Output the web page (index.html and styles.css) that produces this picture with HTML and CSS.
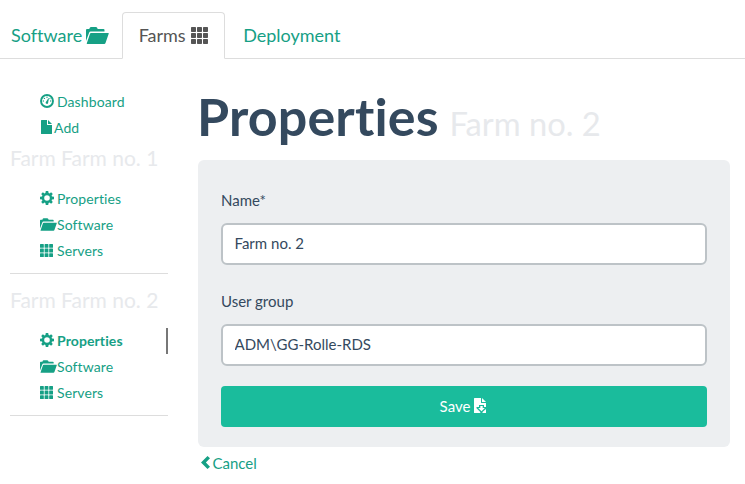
FILE: index.html
```html
<!DOCTYPE html>
<html lang="en">
<head>
<meta charset="utf-8">
<title>Farm properties</title>
<link rel="stylesheet" href="styles.css">
</head>
<body>
<svg class="defs" aria-hidden="true">
  <symbol id="folder" viewBox="0 0 23 17"><path d="M0 14V3Q0 2 1 2H3.200L4 .5Q4.200 0 5 0H10Q10.600 0 11 .6L11.700 2H17.500Q18.500 2 18.500 3V4.500H4.600Q3.600 4.500 3.200 5.500ZM5 6H22.300Q23 6 22.700 6.800L19.500 16Q19.200 17 18.200 17H1.200Q.5 17 .8 16.200L4 6.800Q4.200 6 5 6Z"/></symbol>
  <symbol id="grid" viewBox="0 0 17 17"><path d="M.7 0H4.300Q5 0 5 .7V4.300Q5 5 4.300 5H.7Q0 5 0 4.300V.7Q0 0 .7 0ZM6.700 0H10.300Q11 0 11 .7V4.300Q11 5 10.300 5H6.700Q6 5 6 4.300V.7Q6 0 6.700 0ZM12.700 0H16.300Q17 0 17 .7V4.300Q17 5 16.300 5H12.700Q12 5 12 4.300V.7Q12 0 12.700 0ZM.7 6H4.300Q5 6 5 6.700V10.300Q5 11 4.300 11H.7Q0 11 0 10.300V6.700Q0 6 .7 6ZM6.700 6H10.300Q11 6 11 6.700V10.300Q11 11 10.300 11H6.700Q6 11 6 10.300V6.700Q6 6 6.700 6ZM12.700 6H16.300Q17 6 17 6.700V10.300Q17 11 16.300 11H12.700Q12 11 12 10.300V6.700Q12 6 12.700 6ZM.7 12H4.300Q5 12 5 12.700V16.300Q5 17 4.300 17H.7Q0 17 0 16.300V12.700Q0 12 .7 12ZM6.700 12H10.300Q11 12 11 12.700V16.300Q11 17 10.300 17H6.700Q6 17 6 16.300V12.700Q6 12 6.700 12ZM12.700 12H16.300Q17 12 17 12.700V16.300Q17 17 16.300 17H12.700Q12 17 12 16.300V12.700Q12 12 12.700 12Z"/></symbol>
  <symbol id="gear" viewBox="0 0 14 14"><path fill-rule="evenodd" d="M5.800 0H8.200L8.600 2 9.500 2.400 11.100 1.200 12.800 2.900 11.600 4.500 12 5.400 14 5.800V8.200L12 8.600 11.600 9.500 12.800 11.100 11.100 12.800 9.500 11.600 8.600 12 8.200 14H5.800L5.400 12 4.500 11.600 2.900 12.800 1.200 11.100 2.400 9.500 2 8.600 0 8.200V5.800L2 5.400 2.400 4.500 1.200 2.900 2.900 1.200 4.500 2.400 5.400 2ZM7 4.200A2.800 2.800 0 1 0 7 9.800 2.800 2.800 0 1 0 7 4.200Z"/></symbol>
  <symbol id="dash" viewBox="0 0 14 14"><circle cx="7" cy="7" r="6" fill="none" stroke="currentColor" stroke-width="1.900"/><path d="M5.700 8.300 6.600 7 8.300 4.200 9 4.500 8.300 7.500 8.100 9A1.250 1.250 0 0 1 5.700 8.300Z"/><circle cx="3.300" cy="7" r=".7"/><circle cx="4.400" cy="4.400" r=".7"/><circle cx="7" cy="3.300" r=".7"/><circle cx="10.700" cy="7" r=".7"/><circle cx="9.900" cy="4.600" r=".6"/></symbol>
  <symbol id="file" viewBox="0 0 11 14"><path d="M.6 0H6V4.400Q6 5 6.600 5H11V13.400Q11 14 10.400 14H.6Q0 14 0 13.400V.6Q0 0 .6 0ZM7 0 11 4H7Z"/></symbol>
  <symbol id="save" viewBox="0 0 12 15"><path d="M.6 0H7V4.400Q7 5 7.600 5H12V9H10V7H5V9H2.500V10.200L6.300 14V15H.6Q0 15 0 14.400V.6Q0 0 .6 0ZM8 0 12 4H8Z"/><path d="M6.300 8H8.700V10H10.800L7.500 13.200 4.200 10H6.300ZM12 11V15H8.500V14Z"/></symbol>
  <symbol id="chevron" viewBox="0 0 9 13"><path d="M6.500 0 9 2.300 4.900 6.500 9 10.700 6.500 13 0 6.500Z"/></symbol>
</svg>
<nav class="tabs">
  <a class="tab"><span>Software</span><svg class="tab-folder"><use href="#folder"/></svg></a>
  <a class="tab active"><span>Farms</span><svg class="tab-grid"><use href="#grid"/></svg></a>
  <a class="tab"><span>Deployment</span></a>
</nav>
<div class="layout">
  <aside class="sidebar">
    <ul class="menu">
      <li><svg class="icon"><use href="#dash"/></svg><span>Dashboard</span></li>
      <li><svg class="icon icon-file"><use href="#file"/></svg><span>Add</span></li>
    </ul>
    <h2 class="farm">Farm Farm no. 1</h2>
    <ul class="menu">
      <li><svg class="icon"><use href="#gear"/></svg><span>Properties</span></li>
      <li><svg class="icon icon-folder"><use href="#folder"/></svg><span>Software</span></li>
      <li><svg class="icon icon-grid"><use href="#grid"/></svg><span>Servers</span></li>
    </ul>
    <hr>
    <h2 class="farm">Farm Farm no. 2</h2>
    <ul class="menu">
      <li class="current"><svg class="icon"><use href="#gear"/></svg><span>Properties</span></li>
      <li><svg class="icon icon-folder"><use href="#folder"/></svg><span>Software</span></li>
      <li><svg class="icon icon-grid"><use href="#grid"/></svg><span>Servers</span></li>
    </ul>
    <hr>
  </aside>
  <main class="content">
    <h1>Properties <small>Farm no. 2</small></h1>
    <form class="panel">
      <label for="name">Name*</label>
      <input id="name" type="text" value="Farm no. 2">
      <label for="group">User group</label>
      <input id="group" type="text" value="ADM\GG-Rolle-RDS">
      <button type="button">Save <svg class="save-icon"><use href="#save"/></svg></button>
    </form>
    <a class="cancel"><svg class="chevron"><use href="#chevron"/></svg><span>Cancel</span></a>
  </main>
</div>
</body>
</html>
```
FILE: styles.css
```css
* { box-sizing: border-box; }
body {
  margin: 0;
  padding-top: 12px;
  background: #fff;
  color: #34495e;
  font: 18px/26px Lato, "Liberation Sans", sans-serif;
  font-variant-ligatures: none;
}
svg { fill: currentColor; flex: none; }
.defs { display: none; }

.tabs {
  display: flex;
  height: 47px;
  border-bottom: 1px solid #ddd;
}
.tab {
  display: flex;
  align-items: center;
  gap: 4px;
  height: 47px;
  padding: 0 13px 0 11px;
  color: #16a085;
}
.tab span { margin-top: -2px; }
.tab svg { margin-top: -1px; }
.tab.active {
  width: 103px;
  gap: 5px;
  padding: 0 0 0 15.5px;
  margin-right: 7px;
  border: 1px solid #ddd;
  border-bottom-color: #fff;
  border-radius: 4px 4px 0 0;
  background: #fff;
  color: #555;
}
.tab-folder { width: 23px; height: 17px; }
.tab-grid { width: 17px; height: 17px; }

.layout { display: flex; }
.sidebar { width: 158px; margin: 30px 30px 0 10px; }
.menu { margin: 0; padding: 0; list-style: none; }
.menu li {
  display: flex;
  align-items: center;
  height: 26px;
  padding-left: 30px;
  font-size: 14px;
  letter-spacing: .1px;
  color: #16a085;
}
.menu .current { border-right: 2px solid #777; font-weight: 700; }
.icon { width: 14px; height: 14px; margin: -2px 3px 0 0; }
.icon-file { width: 11px; margin: -2px 2px 0 1px; }
.icon-folder { width: 17px; height: 13px; margin: -1px 0 0; }
.icon-grid { width: 13px; height: 13px; margin: -1px 4px 0 0; }
.farm {
  height: 45px;
  margin: 0;
  padding-top: 4px;
  font-size: 21px;
  line-height: 26px;
  font-weight: 400;
  color: #e7e9ec;
  white-space: nowrap;
}
.sidebar hr { height: 1px; margin: 9px 0; border: 0; background: #ddd; }

.content { width: 532px; }
h1 {
  height: 101px;
  margin: 0 0 0 -1px;
  padding-top: 29px;
  font-size: 52px;
  line-height: 57px;
  font-weight: 700;
  letter-spacing: .15px;
  word-spacing: -2px;
  white-space: nowrap;
}
h1 small {
  font-size: 32.7px;
  font-weight: 400;
  letter-spacing: 0;
  word-spacing: 0;
  color: #e7e9ec;
  line-height: 1;
}
.panel {
  display: flex;
  flex-direction: column;
  height: 287px;
  padding: 27px 23px 20px;
  border-radius: 6px;
  background: #edeff1;
}
.panel label { font-size: 15px; line-height: 26px; margin-bottom: 10px; }
.panel input {
  height: 42px;
  margin: 0 0 23px;
  padding: 0 12px 2px 11.5px;
  border: 2px solid #bdc3c7;
  border-radius: 6px;
  background: #fff;
  color: #34495e;
  font: 15px/22px Lato, sans-serif;
}
.panel button {
  display: flex;
  align-items: center;
  justify-content: center;
  gap: 4px;
  height: 41px;
  margin-top: -3px;
  padding: 0 2px 0 0;
  border: 0;
  border-radius: 4px;
  background: #1abc9c;
  color: #fff;
  font: 15px/21px Lato, sans-serif;
}
.save-icon { width: 12px; height: 15px; margin-top: -2px; }
.cancel {
  display: flex;
  align-items: center;
  gap: 2.5px;
  height: 33px;
  padding-left: 3px;
  font-size: 15px;
  color: #16a085;
}
.cancel span { margin-top: -2px; }
.chevron { width: 9px; height: 13px; margin-top: -3px; }
```
